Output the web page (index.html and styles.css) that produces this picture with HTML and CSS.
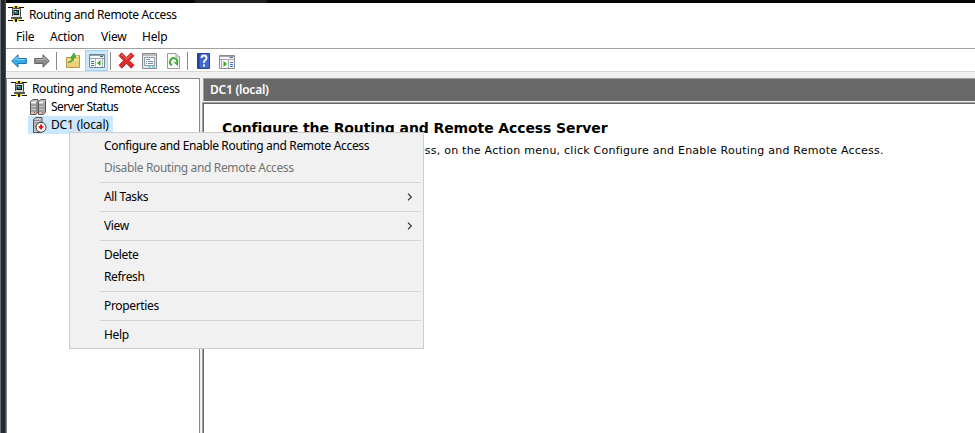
FILE: index.html
```html
<!DOCTYPE html>
<html lang="en">
<head>
<meta charset="utf-8">
<title>Routing and Remote Access</title>
<link rel="stylesheet" href="styles.css">
</head>
<body>
<svg class="defs" width="0" height="0">
  <symbol id="net" viewBox="0 0 16 16">
    <path d="M0 1.5H16M0 14.5H16" stroke="#111"/>
    <path d="M5 1H7M9 1H11M5 14H7M9 14H11" stroke="#f2d900" stroke-width="2"/>
    <path d="M8 0V3M8 13V16" stroke="#222" stroke-width="2"/>
    <path d="M4.5 2.5H12.5V10.5H4.5Z" fill="#ddd" stroke="#444"/>
    <path d="M5.5 4H11V9H5.5Z" fill="#111"/><path d="M6.5 5H10V8H6.5Z" fill="#168a83"/><path d="M6.5 5H8V6H6.5Z" fill="#b5f3ef"/>
    <path d="M3 11H14V13H3Z" fill="#555"/><path d="M4 10.5H12" stroke="#ddd"/>
  </symbol>
</svg>
<div class="desktop">
  <div class="window">
    <header class="title"><svg width="16" height="16"><use href="#net"/></svg><span>Routing and Remote Access</span></header>
    <nav class="menubar"><span>File</span><span>Action</span><span>View</span><span>Help</span></nav>
    <div class="toolbar">
      <svg class="back" width="16" height="14" viewBox="0 0 16 14"><path d="M.7 7 7 .8V4.5H15.3V9.5H7V13.2Z" fill="#36a9e8" stroke="#2070ad"/><path d="M2.5 6.5 6 3V5.5H14" fill="none" stroke="#8ddcff"/></svg>
      <svg class="forward" width="16" height="14" viewBox="0 0 16 14"><path d="M15.3 7 9 .8V4.5H.7V9.5H9V13.2Z" fill="#8c8c8c" stroke="#626262"/><path d="M2 5.5H10V3L13.3 6.5" fill="none" stroke="#b9b9b9"/></svg>
      <i class="sep"></i>
      <svg class="folder" width="15" height="16" viewBox="0 0 15 16"><path d="M.5 4.5H6L7.5 2.5H13.5V14.5H.5Z" fill="#ebcf79" stroke="#b79745"/><path d="M1 7H13" stroke="#f9e9ab"/><path d="M9 3H12" stroke="#fff"/><path d="M2 9.5Q6 8.5 6.5 4.5L4.5 5 8-.1 10 4.5 8.2 4.2Q8 9 2 9.5" fill="#48bd36" stroke="#258b22" stroke-width=".6"/></svg>
      <span class="pressed"><svg width="16" height="14" viewBox="0 0 16 14"><path d="M.5.5H15.5V13.5H.5Z" fill="#f8f9fa" stroke="#748292"/><path d="M1 1.5H15M1 4.5H15" stroke="#93a1af"/><path d="M11 2.5H14" stroke="#465969"/><path d="M2 7.5H5M2 9.5H5M2 11.5H5" stroke="#526a83"/><path d="M6.5 5V13M13.5 5V13" stroke="#aab4be"/><path d="M11.5 6V12L8 9Z" fill="#36aa25"/></svg></span>
      <i class="sep close"></i>
      <svg class="delete" width="17" height="17" viewBox="0 0 17 17"><path d="M3.5.8 8.5 5.5 13 .8 16 3.8 11.3 8.4 16 13.2 13.3 16.2 8.4 11.5 3.8 16.2 1 13.3 5.6 8.5 1 3.8Z" fill="#dd2b2b" stroke="#b51c1c" stroke-width=".8"/><path d="M3.5 2.5 8.5 7.3 13 2.7" fill="none" stroke="#f57770"/></svg>
      <svg class="props" width="15" height="16" viewBox="0 0 15 16"><path d="M.5.5H14.5V15.5H.5Z" fill="#e8e8e8" stroke="#898989"/><path d="M1 2H14" stroke="#bbb" stroke-width="2"/><path d="M2.5 4.5H12.5V12.5H2.5Z" fill="#fff" stroke="#8a98a7"/><path d="M4 6.5H8M4 8.5H5M4 10.5H5M6 8.5H11M6 10.5H11" stroke="#778a9d"/><path d="M6 14H9M10 14H13" stroke="#45b6da"/></svg>
      <svg class="refresh" width="13" height="16" viewBox="0 0 13 16"><path d="M.5.5H9L12.5 4V15.5H.5Z" fill="#fafafa" stroke="#9a9a9a"/><path d="M9 .5V4H12.5" fill="#ddd" stroke="#aaa"/><path d="M5 12A3.6 3.6 0 1 1 10 10" fill="none" stroke="#3aae35" stroke-width="2"/><path d="M6.5 9H11V13.2Z" fill="#3aae35"/></svg>
      <i class="sep third"></i>
      <svg class="help" width="13" height="16" viewBox="0 0 13 16"><path d="M.5.5H12.5V15.5H.5Z" fill="#4169cf" stroke="#26459a"/><path d="M1.5 1V15" stroke="#263f9a" stroke-width="2"/><path d="M4.5 5Q4.5 2.5 7 2.5T9.5 5Q9.5 6.5 8 7.5T7 10" fill="none" stroke="#fff" stroke-width="1.8"/><path d="M6 11.5H8V13.5H6Z" fill="#fff"/></svg>
      <svg class="pane" width="16" height="14" viewBox="0 0 16 14"><path d="M.5.5H15.5V13.5H.5Z" fill="#f8f8f8" stroke="#858c93"/><path d="M1 1.5H15M1 4.5H15" stroke="#a2a8ad"/><path d="M10.5 2.5H14" stroke="#566879"/><path d="M9.5 5V13M2.5 5V13" stroke="#aaa"/><path d="M4.5 6V12L8 9Z" fill="#36aa25"/><path d="M11 7.5H14M11 9.5H14M11 11.5H14" stroke="#3b79c7"/></svg>
    </div>
    <main class="content">
      <aside class="tree">
        <div class="node root"><svg width="16" height="16"><use href="#net"/></svg><span>Routing and Remote Access</span></div>
        <div class="node status"><svg width="17" height="16" viewBox="0 0 17 16"><g fill="#c7c7c7" stroke="#555"><path d="M.5 2.5 3 .5H8V13L6 15.5H.5ZM8.5 2.5 11 .5H15.5V13L13.5 15.5H8.5Z"/></g><path d="M1 3.5H6M9 3.5H13" stroke="#fff"/><path d="M1 6H6M9 6H13M1 9H6M9 9H13M1 12H6M9 12H13" stroke="#777"/><path d="M6.5 3V14M14 3V14" stroke="#888"/><path d="M4 13.5H5M12 13.5H13" stroke="#d33"/></svg><span>Server Status</span></div>
        <div class="node server"><svg width="14" height="16" viewBox="0 0 14 16"><path d="M.5 2.5 3 .5H9V13L7 15.5H.5Z" fill="#c7c7c7" stroke="#555"/><path d="M1 3.5H6M7 3V14M1 6H6M1 9H6" fill="none" stroke="#888"/><circle cx="8" cy="10.3" r="5" fill="#fff" stroke="#333"/><path d="M7 7.5H9V9.2H11L8 13 5 9.2H7Z" fill="#ee1111"/></svg><span>DC1 (local)</span></div>
      </aside>
      <section class="detail">
        <div class="heading">DC1 (local)</div>
        <article>
          <h1>Configure the Routing and Remote Access Server</h1>
          <p>To set up Routing and Remote Access, on the Action menu, click Configure and Enable Routing and Remote Access.</p>
        </article>
      </section>
    </main>
  </div>
  <div class="popup">
    <div class="item">Configure and Enable Routing and Remote Access</div>
    <div class="item disabled">Disable Routing and Remote Access</div>
    <hr>
    <div class="item">All Tasks<svg width="6" height="8" viewBox="0 0 6 8"><path d="M1 .7 4.3 4 1 7.3" fill="none" stroke="#333" stroke-width="1.2"/></svg></div>
    <hr>
    <div class="item">View<svg width="6" height="8" viewBox="0 0 6 8"><path d="M1 .7 4.3 4 1 7.3" fill="none" stroke="#333" stroke-width="1.2"/></svg></div>
    <hr>
    <div class="item">Delete</div>
    <div class="item">Refresh</div>
    <hr>
    <div class="item">Properties</div>
    <hr>
    <div class="item">Help</div>
  </div>
</div>
</body>
</html>
```
FILE: styles.css
```css
* { box-sizing: border-box; }
body { margin: 0; overflow: hidden; font: 12px/18px "Noto Sans", "Open Sans", sans-serif; letter-spacing: -.35px; color: #000; }
svg { display: block; flex: none; }
.defs { position: absolute; }
.desktop { position: relative; height: 433px; padding: 3px 0 0 6px; background: linear-gradient(90deg, #68717a 0 1px, #252a2b 1px 5px, #4a4e50 5px 6px, #050505 6px 195px, #202020 195px 267px, #050505 267px); }
.window { height: 430px; background: #f0f0f0; display: flex; flex-direction: column; }
.title { height: 23px; background: #fff; display: flex; padding: 3px 0 0 2px; }
.title span { margin-left: 5px; }
.menubar { height: 23px; background: #fff; border-bottom: 1px solid #a0a0a0; display: grid; grid-template-columns: 34px 51px 41px 40px; padding: 2px 0 0 10px; letter-spacing: -.2px; }
.toolbar { height: 23px; background: #fff; border-bottom: 1px solid #d7d7d7; display: flex; align-items: center; padding: 1px 0 0 5px; }
.sep { width: 1px; height: 18px; background: #8a8a8a; margin: 0 9px 0 6px; }
.forward { margin-left: 7px; }
.pressed { width: 23px; height: 21px; margin-left: 4px; border: 1px solid #99d1ff; background: #cce8ff; display: flex; align-items: center; justify-content: center; }
.close { margin: 0 7px 0 2px; }
.props { margin-left: 7px; }
.refresh { margin-left: 10px; }
.third { margin: 0 9px 0 7px; }
.pane { margin-left: 9px; margin-top: 2px; }
.content { flex: 1; min-height: 0; display: flex; padding-top: 6px; }
.tree { width: 194px; background: #fff; border: 1px solid #828790; border-bottom: 0; padding-top: 1px; }
.node { height: 18px; display: flex; align-items: center; width: max-content; }
.root { margin-left: 4px; }
.root span { margin-left: 5px; }
.status { margin-left: 23px; letter-spacing: -.55px; }
.status span { margin-left: 4px; }
.server { background: #cce8ff; margin-left: 21px; padding: 0 4px 0 5px; letter-spacing: -.15px; }
.server span { margin-left: 4px; }
.detail { flex: 1; margin-left: 3px; display: flex; flex-direction: column; }
.heading { height: 23px; background: #696969; border: 1px solid #a0a0a0; border-width: 1px 0 0 1px; color: #fff; font-weight: 600; padding: 2px 0 0 6px; letter-spacing: -.25px; }
article { flex: 1; margin-top: 2px; background: #fff; border: solid #696969; border-width: 1px 0 0 1px; outline: 1px solid #a0a0a0; padding: 15px 0 0 18px; font-family: "DejaVu Sans", sans-serif; }
h1 { margin: 0; font-size: 14px; line-height: 18px; letter-spacing: -.1px; white-space: nowrap; }
p { margin: 5px 0 0; font-size: 11px; line-height: 18px; white-space: nowrap; letter-spacing: .24px; }
.popup { position: absolute; left: 69px; top: 132px; width: 355px; height: 217px; padding: 2px; background: #f1f1f1; border: 1px solid #ccc; }
.item { height: 22px; line-height: 20px; padding: 0 8px 0 32px; display: flex; justify-content: space-between; align-items: center; }
.disabled { color: #737373; }
.popup hr { height: 1px; margin: 3px 0 3px 28px; border: 0; background: #d5d5d5; }
```
